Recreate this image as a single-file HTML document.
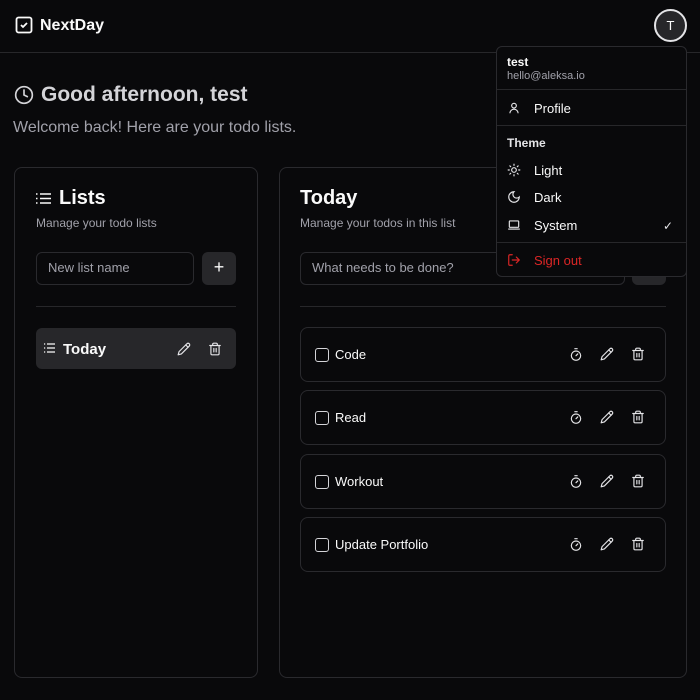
<!DOCTYPE html>
<html><head><meta charset="utf-8"><style>
*{box-sizing:border-box;margin:0;padding:0}
body{width:700px;height:700px;background:#09090b;color:#fafafa;font-family:"Liberation Sans",sans-serif;position:relative;overflow:hidden}
.a{position:absolute}
svg{display:block}
.card{position:absolute;border:1px solid #2a2a2e;border-radius:8px;background:#09090b}
.inp{position:absolute;border:1px solid #2a2a2e;border-radius:6px;font-size:13px;color:#a1a1aa;padding-left:11px;line-height:30px}
.item{position:absolute;left:300px;width:366px;height:55px;border:1px solid #2a2a2e;border-radius:8px}
.item .cb{position:absolute;left:14px;top:20px;width:14px;height:14px;border:1.5px solid #d4d4d8;border-radius:3px}
.item .t{position:absolute;left:34px;top:19px;font-size:13px;color:#fafafa}
.item .ic{position:absolute;top:19px}
.mi{position:absolute;left:10px;font-size:13px;color:#fafafa}
.mi svg{position:absolute;left:0;top:0}
.mi span{position:absolute;left:27px;top:0;white-space:nowrap}
</style></head><body>
<div class="a" style="left:0;top:52px;width:700px;height:1px;background:#27272a"></div>
<svg class="a" style="left:15px;top:16px" width="18" height="18" viewBox="0 0 18 18" fill="none" stroke="#fafafa" stroke-width="1.8"><rect x="1.5" y="1.5" width="15" height="15" rx="2"/><path d="M6 9l2 2 4-4"/></svg>
<div class="a" style="left:40px;top:17px;font-size:16px;font-weight:bold">NextDay</div>
<div class="a" style="left:654px;top:9px;width:33px;height:33px;border-radius:50%;border:2px solid #e4e4e7;background:#27272a;font-size:13px;text-align:center;line-height:29px">T</div>

<svg class="a" style="left:14px;top:85px" width="20" height="20" viewBox="0 0 24 24" fill="none" stroke="#d4d4d8" stroke-width="2" stroke-linecap="round"><circle cx="12" cy="12" r="10"/><path d="M12 6v6l4 2"/></svg>
<div class="a" style="left:41px;top:83px;font-size:21px;font-weight:bold;color:#d4d4d8">Good afternoon, test</div>
<div class="a" style="left:13px;top:119px;font-size:16px;color:#a1a1aa">Welcome back! Here are your todo lists.</div>

<div class="card" style="left:14px;top:167px;width:244px;height:511px"></div>
<svg class="a" style="left:36px;top:192px" width="15" height="13" viewBox="0 0 15 13" fill="none" stroke="#fafafa" stroke-width="1.4"><path d="M4 2h11M4 6.5h11M4 11h11M0 2h1.5M0 6.5h1.5M0 11h1.5"/></svg>
<div class="a" style="left:59px;top:187px;font-size:20px;font-weight:bold">Lists</div>
<div class="a" style="left:36px;top:216px;font-size:12px;color:#a1a1aa">Manage your todo lists</div>
<div class="inp" style="left:36px;top:252px;width:158px;height:33px">New list name</div>
<div class="a" style="left:202px;top:252px;width:34px;height:33px;border-radius:6px;background:#27272a;text-align:center;line-height:31px;font-size:18px">+</div>
<div class="a" style="left:36px;top:306px;width:200px;height:1px;background:#27272a"></div>
<div class="a" style="left:36px;top:328px;width:200px;height:41px;border-radius:6px;background:#27272a"></div>
<svg class="a" style="left:44px;top:343px" width="11" height="10" viewBox="0 0 11 10" fill="none" stroke="#fafafa" stroke-width="1.3"><path d="M3 1h8M3 5h8M3 9h8M0 1h1.2M0 5h1.2M0 9h1.2"/></svg>
<div class="a" style="left:63px;top:341px;font-size:15px;font-weight:bold">Today</div>
<svg class="a pen" style="left:177px;top:342px" width="14" height="14" viewBox="0 0 24 24" fill="none" stroke="#e4e4e7" stroke-width="2" stroke-linecap="round" stroke-linejoin="round"><path d="M17 3a2.8 2.8 0 014 4L7.5 20.5 2 22l1.5-5.5z"/><path d="M15 5l4 4"/></svg>
<svg class="a" style="left:208px;top:342px" width="14" height="14" viewBox="0 0 24 24" fill="none" stroke="#e4e4e7" stroke-width="2" stroke-linecap="round"><path d="M3 6h18M19 6v14a2 2 0 01-2 2H7a2 2 0 01-2-2V6M8 6V4a2 2 0 012-2h4a2 2 0 012 2v2M10 11v6M14 11v6"/></svg>

<div class="card" style="left:279px;top:167px;width:408px;height:511px"></div>
<div class="a" style="left:300px;top:187px;font-size:20px;font-weight:bold">Today</div>
<div class="a" style="left:300px;top:216px;font-size:12px;color:#a1a1aa">Manage your todos in this list</div>
<div class="inp" style="left:300px;top:252px;width:325px;height:33px">What needs to be done?</div>
<div class="a" style="left:632px;top:252px;width:34px;height:33px;border-radius:6px;background:#27272a"></div>
<div class="a" style="left:300px;top:306px;width:366px;height:1px;background:#27272a"></div>

<div class="item" style="top:327px"><div class="cb"></div><div class="t">Code</div>
<svg class="ic" style="left:268px" width="14" height="15" viewBox="0 0 24 24" fill="none" stroke="#e4e4e7" stroke-width="2" stroke-linecap="round"><path d="M10 2h4M12 14l3-3"/><circle cx="12" cy="14" r="8"/></svg>
<svg class="ic" style="left:299px" width="14" height="14" viewBox="0 0 24 24" fill="none" stroke="#e4e4e7" stroke-width="2" stroke-linecap="round" stroke-linejoin="round"><path d="M17 3a2.8 2.8 0 014 4L7.5 20.5 2 22l1.5-5.5z"/><path d="M15 5l4 4"/></svg>
<svg class="ic" style="left:330px" width="14" height="14" viewBox="0 0 24 24" fill="none" stroke="#e4e4e7" stroke-width="2" stroke-linecap="round"><path d="M3 6h18M19 6v14a2 2 0 01-2 2H7a2 2 0 01-2-2V6M8 6V4a2 2 0 012-2h4a2 2 0 012 2v2M10 11v6M14 11v6"/></svg></div>
<div class="item" style="top:390px"><div class="cb"></div><div class="t">Read</div>
<svg class="ic" style="left:268px" width="14" height="15" viewBox="0 0 24 24" fill="none" stroke="#e4e4e7" stroke-width="2" stroke-linecap="round"><path d="M10 2h4M12 14l3-3"/><circle cx="12" cy="14" r="8"/></svg>
<svg class="ic" style="left:299px" width="14" height="14" viewBox="0 0 24 24" fill="none" stroke="#e4e4e7" stroke-width="2" stroke-linecap="round" stroke-linejoin="round"><path d="M17 3a2.8 2.8 0 014 4L7.5 20.5 2 22l1.5-5.5z"/><path d="M15 5l4 4"/></svg>
<svg class="ic" style="left:330px" width="14" height="14" viewBox="0 0 24 24" fill="none" stroke="#e4e4e7" stroke-width="2" stroke-linecap="round"><path d="M3 6h18M19 6v14a2 2 0 01-2 2H7a2 2 0 01-2-2V6M8 6V4a2 2 0 012-2h4a2 2 0 012 2v2M10 11v6M14 11v6"/></svg></div>
<div class="item" style="top:454px"><div class="cb"></div><div class="t">Workout</div>
<svg class="ic" style="left:268px" width="14" height="15" viewBox="0 0 24 24" fill="none" stroke="#e4e4e7" stroke-width="2" stroke-linecap="round"><path d="M10 2h4M12 14l3-3"/><circle cx="12" cy="14" r="8"/></svg>
<svg class="ic" style="left:299px" width="14" height="14" viewBox="0 0 24 24" fill="none" stroke="#e4e4e7" stroke-width="2" stroke-linecap="round" stroke-linejoin="round"><path d="M17 3a2.8 2.8 0 014 4L7.5 20.5 2 22l1.5-5.5z"/><path d="M15 5l4 4"/></svg>
<svg class="ic" style="left:330px" width="14" height="14" viewBox="0 0 24 24" fill="none" stroke="#e4e4e7" stroke-width="2" stroke-linecap="round"><path d="M3 6h18M19 6v14a2 2 0 01-2 2H7a2 2 0 01-2-2V6M8 6V4a2 2 0 012-2h4a2 2 0 012 2v2M10 11v6M14 11v6"/></svg></div>
<div class="item" style="top:517px"><div class="cb"></div><div class="t">Update Portfolio</div>
<svg class="ic" style="left:268px" width="14" height="15" viewBox="0 0 24 24" fill="none" stroke="#e4e4e7" stroke-width="2" stroke-linecap="round"><path d="M10 2h4M12 14l3-3"/><circle cx="12" cy="14" r="8"/></svg>
<svg class="ic" style="left:299px" width="14" height="14" viewBox="0 0 24 24" fill="none" stroke="#e4e4e7" stroke-width="2" stroke-linecap="round" stroke-linejoin="round"><path d="M17 3a2.8 2.8 0 014 4L7.5 20.5 2 22l1.5-5.5z"/><path d="M15 5l4 4"/></svg>
<svg class="ic" style="left:330px" width="14" height="14" viewBox="0 0 24 24" fill="none" stroke="#e4e4e7" stroke-width="2" stroke-linecap="round"><path d="M3 6h18M19 6v14a2 2 0 01-2 2H7a2 2 0 01-2-2V6M8 6V4a2 2 0 012-2h4a2 2 0 012 2v2M10 11v6M14 11v6"/></svg></div>

<div class="a" style="left:496px;top:46px;width:191px;height:231px;border:1px solid #2a2a2e;border-radius:6px;background:#09090b">
 <div class="a" style="left:10px;top:8px;font-size:12px;font-weight:bold">test</div>
 <div class="a" style="left:10px;top:23px;font-size:11px;color:#a1a1aa">hello@aleksa.io</div>
 <div class="a" style="left:0;top:42px;width:189px;height:1px;background:#27272a"></div>
 <div class="mi" style="top:54px"><svg width="14" height="14" viewBox="0 0 24 24" fill="none" stroke="#e4e4e7" stroke-width="2"><circle cx="12" cy="8" r="4"/><path d="M5 21a7 7 0 0114 0"/></svg><span>Profile</span></div>
 <div class="a" style="left:0;top:78px;width:189px;height:1px;background:#27272a"></div>
 <div class="a" style="left:10px;top:89px;font-size:12px;font-weight:bold;color:#e4e4e7">Theme</div>
 <div class="mi" style="top:116px"><svg width="14" height="14" viewBox="0 0 24 24" fill="none" stroke="#e4e4e7" stroke-width="2" stroke-linecap="round"><circle cx="12" cy="12" r="4"/><path d="M12 2v2M12 20v2M4.9 4.9l1.4 1.4M17.7 17.7l1.4 1.4M2 12h2M20 12h2M4.9 19.1l1.4-1.4M17.7 6.3l1.4-1.4"/></svg><span>Light</span></div>
 <div class="mi" style="top:143px"><svg width="14" height="14" viewBox="0 0 24 24" fill="none" stroke="#e4e4e7" stroke-width="2"><path d="M12 3a6 6 0 009 9 9 9 0 11-9-9z"/></svg><span>Dark</span></div>
 <div class="mi" style="top:171px"><svg width="14" height="14" viewBox="0 0 24 24" fill="none" stroke="#e4e4e7" stroke-width="2"><rect x="4" y="5" width="16" height="11" rx="1"/><path d="M2 19h20"/></svg><span>System</span></div>
 <div class="a" style="left:166px;top:172px;font-size:12px;color:#e4e4e7">✓</div>
 <div class="a" style="left:0;top:195px;width:189px;height:1px;background:#27272a"></div>
 <div class="mi" style="top:206px;color:#dc2626"><svg width="14" height="14" viewBox="0 0 24 24" fill="none" stroke="#dc2626" stroke-width="2" stroke-linecap="round"><path d="M9 21H5a2 2 0 01-2-2V5a2 2 0 012-2h4M16 17l5-5-5-5M21 12H9"/></svg><span>Sign out</span></div>
</div>
</body></html>
